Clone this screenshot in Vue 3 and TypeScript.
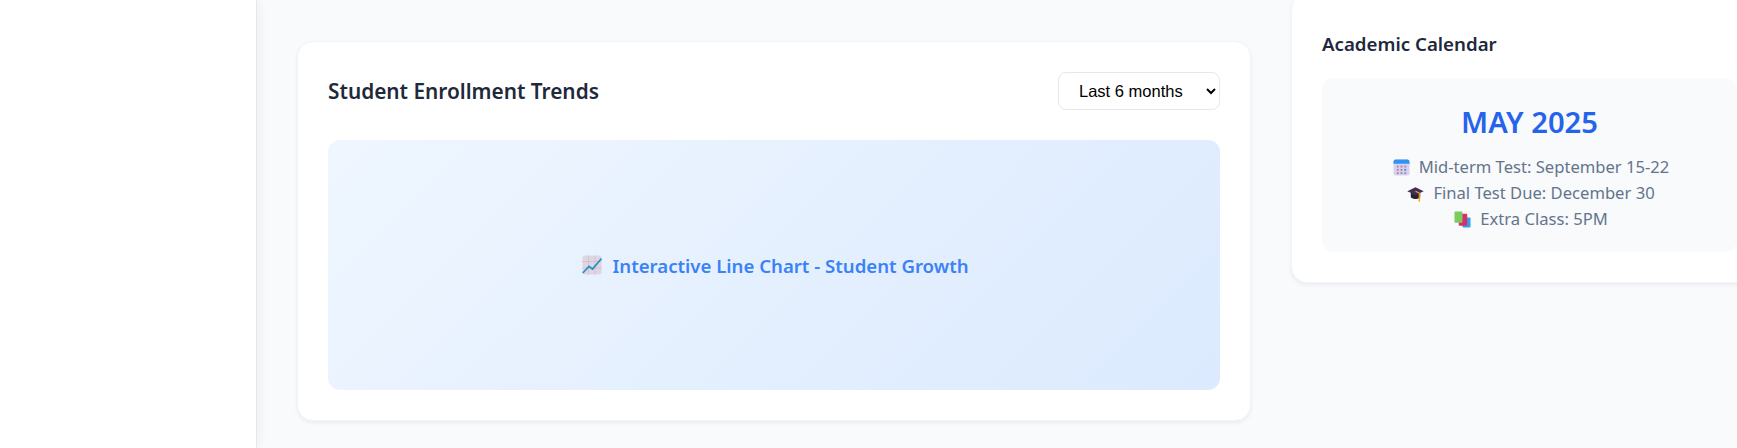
<script setup lang="ts">
const events: { id: string; text: string }[] = [
  { id: 'cal', text: 'Mid-term Test: September 15-22' },
  { id: 'cap', text: 'Final Test Due: December 30' },
  { id: 'books', text: 'Extra Class: 5PM' },
]
</script>

<template>
  <div class="page">
    <aside class="sidebar"></aside>
    <main class="main">
      <section class="card chart-card">
        <header class="chart-head">
          <h2>Student Enrollment Trends</h2>
          <select class="range">
            <option>Last 6 months</option>
          </select>
        </header>
        <div class="chart">
          <svg class="emo chart-emo" viewBox="0 0 20 20">
            <rect x="0.500" y="0.500" width="19" height="19" rx="2.500" fill="#e0d6e2" />
            <path d="M0.500 6.500h19M0.500 13h19M6.500 0.500v19M13 0.500v19" stroke="#cfc3d6" stroke-width="1" fill="none" />
            <path d="M0.800 18 7 11.500l3.500 2.500L19.500 3.500" stroke="#2b8fc6" stroke-width="1.800" fill="none" />
          </svg>
          <span>Interactive Line Chart - Student Growth</span>
        </div>
      </section>
      <section class="card cal-card">
        <h3>Academic Calendar</h3>
        <div class="panel">
          <div class="month">MAY 2025</div>
          <div class="events">
            <div v-for="e in events" :key="e.id" class="event">
              <svg v-if="e.id === 'cal'" class="emo" viewBox="0 0 18 18">
                <rect x="0.500" y="0.500" width="17" height="17" rx="2.500" fill="#ddd0ec" />
                <path d="M0.500 5V3a2.500 2.500 0 0 1 2.500-2.500h12A2.500 2.500 0 0 1 17.500 3v2z" fill="#2f93f5" />
                <g fill="#9a8cab">
                  <rect x="4" y="7" width="2" height="2" /><rect x="8" y="7" width="2" height="2" /><rect x="12" y="7" width="2" height="2" />
                  <rect x="4" y="10.500" width="2" height="2" /><rect x="8" y="10.500" width="2" height="2" /><rect x="12" y="10.500" width="2" height="2" fill="#2f93f5" />
                  <rect x="4" y="14" width="2" height="2" /><rect x="8" y="14" width="2" height="2" /><rect x="12" y="14" width="2" height="2" />
                </g>
              </svg>
              <svg v-else-if="e.id === 'cap'" class="emo" viewBox="0 0 18 18">
                <path d="M4 8v5c2 2.500 8 2.500 10 0V8z" fill="#2d2233" />
                <path d="M0.300 6.500 9 2.500l8.700 4L9 10.500z" fill="#43305a" />
                <path d="M9 6.500l4 2v6" stroke="#f5a623" stroke-width="1.200" fill="none" />
                <rect x="12.200" y="13.500" width="1.700" height="4.300" rx="0.500" fill="#f5a623" />
              </svg>
              <svg v-else class="emo" viewBox="0 0 18 18">
                <rect x="9" y="7" width="8.500" height="10.500" rx="1" fill="#2ea3e6" />
                <rect x="5" y="3" width="9" height="12.500" rx="1" fill="#d62f6a" />
                <rect x="0.500" y="0.500" width="8.500" height="12" rx="1" fill="#7ccb5f" />
              </svg>
              <span>{{ e.text }}</span>
            </div>
          </div>
        </div>
      </section>
    </main>
  </div>
</template>

<style>
html, body { margin: 0; height: 100%; overflow: hidden; background: #f8fafc; }
</style>

<style scoped>
.page {
  display: flex;
  width: 1737px;
  height: 448px;
  overflow: hidden;
  background: #f8fafc;
  font-family: "Noto Sans", "Open Sans", sans-serif;
}
.sidebar {
  flex: 0 0 257px;
  box-sizing: border-box;
  background: #fff;
  border-right: 1px solid #e2e8f0;
  box-shadow: 2px 0 10px rgba(0, 0, 0, 0.05);
}
.main {
  flex: 0 0 auto;
  display: flex;
  align-items: flex-start;
  gap: 40px;
  padding-left: 40px;
}
.card {
  flex: none;
  box-sizing: border-box;
  background: #fff;
  border-radius: 16px;
  border: 1px solid #f1f5f9;
  box-shadow: 0 2px 4px rgba(15, 23, 42, 0.06);
  padding: 30px;
}
.chart-card {
  width: 954px;
  height: 380px;
  margin-top: 41px;
}
.chart-head {
  display: flex;
  justify-content: space-between;
  align-items: center;
  height: 38px;
  margin-bottom: 30px;
}
h2 {
  margin: 0;
  font-size: 20.800px;
  font-weight: 600;
  color: #1e293b;
}
.range {
  box-sizing: border-box;
  width: 162px;
  height: 38px;
  padding: 8px 16px;
  border: 1px solid #e2e8f0;
  border-radius: 8px;
  background: #fff;
  color: #000;
  font-family: "Liberation Sans", Arial, sans-serif;
  font-size: 16.500px;
}
.chart {
  display: flex;
  align-items: center;
  justify-content: center;
  gap: 10px;
  height: 250px;
  border-radius: 12px;
  background: linear-gradient(135deg, #eff6ff, #dbeafe);
  color: #3b82f6;
  font-size: 18.600px;
  font-weight: 600;
}
.emo { width: 17px; height: 17px; flex: none; margin-left: 3px; }
.chart-emo { width: 20px; height: 20px; }
.cal-card {
  width: 477px;
  margin-top: -7px;
  height: 290px;
}
h3 {
  margin: 0 0 14px;
  font-size: 18.700px;
  line-height: 40px;
  font-weight: 600;
  color: #1e293b;
}
.panel {
  height: 174px;
  box-sizing: border-box;
  padding: 24px;
  border-radius: 12px;
  background: #f8fafc;
  text-align: center;
}
.month {
  font-size: 29.200px;
  line-height: 40px;
  font-weight: 600;
  color: #2563eb;
  margin-bottom: 12px;
}
.events {
  color: #64748b;
  font-size: 16.600px;
  line-height: 26px;
}
.event {
  display: flex;
  justify-content: center;
  align-items: center;
  gap: 9px;
}
</style>
